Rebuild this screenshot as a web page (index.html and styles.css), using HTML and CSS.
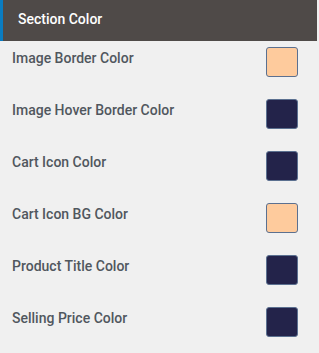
FILE: index.html
```html
<!DOCTYPE html>
<html lang="en">
<head>
    <meta charset="UTF-8">
    <meta name="viewport" content="width=device-width, initial-scale=1.0">
    <title>Section Color</title>
    <link rel="stylesheet" href="styles.css">
</head>
<body>

    <div class="panel">
        <div class="panel-head">Section Color</div>

        <div class="color-row">
            <span class="color-label">Image Border Color</span>
            <span class="swatch swatch-peach"></span>
        </div>
        <div class="color-row">
            <span class="color-label">Image Hover Border Color</span>
            <span class="swatch swatch-navy"></span>
        </div>
        <div class="color-row">
            <span class="color-label">Cart Icon Color</span>
            <span class="swatch swatch-navy"></span>
        </div>
        <div class="color-row">
            <span class="color-label">Cart Icon BG Color</span>
            <span class="swatch swatch-peach"></span>
        </div>
        <div class="color-row">
            <span class="color-label">Product Title Color</span>
            <span class="swatch swatch-navy"></span>
        </div>
        <div class="color-row">
            <span class="color-label">Selling Price Color</span>
            <span class="swatch swatch-navy"></span>
        </div>
    </div>

</body>
</html>
```

FILE: styles.css
```css
body {
    font-family: Roboto, "Liberation Sans", Arial, sans-serif;
    background-color: #f0f0f0;
    margin: 0;
}

.panel {
    width: 317px;
}

.panel-head {
    background-color: #4f4a48;
    color: #fff;
    font-size: 14px;
    font-weight: 500;
    height: 41px;
    line-height: 38px;
    padding-left: 15px;
    border-left: 3px solid #0a7cc1;
    box-sizing: border-box;
}

.color-row {
    display: flex;
    justify-content: space-between;
    align-items: flex-start;
    height: 52px;
    box-sizing: border-box;
    padding: 6px 19px 0 12px;
}

.color-label {
    color: #50575e;
    font-size: 14px;
    font-weight: 500;
    line-height: 16px;
    margin-top: 3px;
}

.swatch {
    width: 30px;
    height: 28px;
    border: 1px solid #5b7090;
    border-radius: 3px;
}

.swatch-peach {
    background-color: #fecb9d;
}

.swatch-navy {
    background-color: #23234a;
}
```
